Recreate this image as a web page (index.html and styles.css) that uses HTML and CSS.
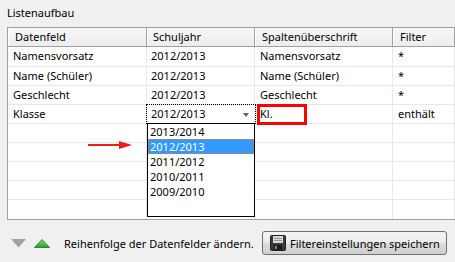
FILE: index.html
```html
<!DOCTYPE html>
<html lang="de">
<head>
    <meta charset="UTF-8">
    <title>Listenaufbau</title>
    <link rel="stylesheet" href="styles.css">
</head>
<body>
    <div class="panel">
        <div class="panel-title">Listenaufbau</div>

        <div class="grid">
            <div class="row head">
                <div class="cell">Datenfeld</div>
                <div class="cell">Schuljahr</div>
                <div class="cell">Spaltenüberschrift</div>
                <div class="cell">Filter</div>
            </div>
            <div class="row first">
                <div class="cell">Namensvorsatz</div>
                <div class="cell">2012/2013</div>
                <div class="cell">Namensvorsatz</div>
                <div class="cell">*</div>
            </div>
            <div class="row">
                <div class="cell">Name (Schüler)</div>
                <div class="cell">2012/2013</div>
                <div class="cell">Name (Schüler)</div>
                <div class="cell">*</div>
            </div>
            <div class="row">
                <div class="cell">Geschlecht</div>
                <div class="cell">2012/2013</div>
                <div class="cell">Geschlecht</div>
                <div class="cell">*</div>
            </div>
            <div class="row">
                <div class="cell">Klasse</div>
                <div class="cell combo">
                    2012/2013
                    <span class="combo-arrow"></span>
                    <ul class="combo-list">
                        <li>2013/2014</li>
                        <li class="selected">2012/2013</li>
                        <li>2011/2012</li>
                        <li>2010/2011</li>
                        <li>2009/2010</li>
                    </ul>
                </div>
                <div class="cell marked">Kl.<span class="mark-box"></span></div>
                <div class="cell">enthält</div>
            </div>
            <div class="row"><div class="cell"></div><div class="cell"></div><div class="cell"></div><div class="cell"></div></div>
            <div class="row"><div class="cell"></div><div class="cell"></div><div class="cell"></div><div class="cell"></div></div>
            <div class="row"><div class="cell"></div><div class="cell"></div><div class="cell"></div><div class="cell"></div></div>
            <div class="row"><div class="cell"></div><div class="cell"></div><div class="cell"></div><div class="cell"></div></div>
            <div class="row last"><div class="cell"></div><div class="cell"></div><div class="cell"></div><div class="cell"></div></div>

            <svg class="pointer" width="45" height="8" viewBox="0 0 45 8">
                <rect x="0" y="3" width="34" height="2" fill="#ee1c1c"/>
                <polygon points="31,0 44,4 31,8" fill="#ee1c1c"/>
            </svg>
        </div>

        <div class="toolbar">
            <svg class="tri" width="15" height="9" viewBox="0 0 15 9">
                <polygon points="0,0 15,0 7.5,8.5" fill="#a0a0a0"/>
            </svg>
            <svg class="tri" width="16" height="9" viewBox="0 0 16 9">
                <defs>
                    <linearGradient id="green" x1="0" y1="0" x2="0" y2="1">
                        <stop offset="0" stop-color="#7ddc72"/>
                        <stop offset="1" stop-color="#2fa02a"/>
                    </linearGradient>
                </defs>
                <polygon points="0.5,8.5 15.5,8.5 8,0.5" fill="url(#green)" stroke="#2b8a27" stroke-width="1"/>
            </svg>
            <span class="hint">Reihenfolge der Datenfelder ändern.</span>
            <button class="save" type="button">
                <svg width="16" height="16" viewBox="0 0 16 16">
                    <rect x="0.5" y="0.5" width="15" height="15" rx="1" fill="#3a3a3a" stroke="#222"/>
                    <rect x="3" y="1" width="10" height="7" fill="#d9d9d9"/>
                    <rect x="4" y="3" width="8" height="1" fill="#9a9a9a"/>
                    <rect x="4" y="5" width="8" height="1" fill="#9a9a9a"/>
                    <rect x="4" y="10" width="8" height="5" fill="#1c1c1c"/>
                    <rect x="5" y="11" width="2" height="3" fill="#8a8a8a"/>
                </svg>
                <span>Filtereinstellungen speichern</span>
            </button>
        </div>
    </div>
</body>
</html>
```
FILE: styles.css
```css
body {
    background-color: #F0F0F0;
    color: #000000;
    font-family: 'Noto Sans', 'Segoe UI', sans-serif;
    font-size: 11px;
    height: 262px;
    margin: 0;
    overflow: hidden;
    width: 455px;
}

.panel {
    overflow: hidden;
    padding: 5px 0 0 7px;
}

.panel-title {
    height: 22px;
    line-height: 16px;
}

.grid {
    background-color: #FFFFFF;
    border: 1px solid #A0A0A0;
    border-right: none;
    position: relative;
    width: 447px;
}

.row {
    border-bottom: 1px solid #E8E8E8;
    box-sizing: border-box;
    display: grid;
    grid-template-columns: 139px 108px 138px 1fr;
    height: 19px;
}

.row.first {
    height: 20px;
}

.row.last {
    border-bottom: none;
}

.cell {
    border-right: 1px solid #E8E8E8;
    line-height: 18px;
    overflow: visible;
    padding-left: 5px;
    position: relative;
    white-space: nowrap;
}

.cell:nth-child(2) {
    padding-left: 4px;
}

.head {
    background: linear-gradient(#F7F7F7, #EDEDED);
    border-bottom: 1px solid #A0A0A0;
}

.head .cell {
    border-right: 1px solid #A0A0A0;
    box-shadow: inset 1px 0 0 #FFFFFF;
    padding-left: 7px;
}

.head .cell:nth-child(2) {
    padding-left: 6px;
}

.combo {
    outline: 1px dotted #000000;
}

.combo-arrow {
    border-left: 3.5px solid transparent;
    border-right: 3.5px solid transparent;
    border-top: 4px solid #606060;
    height: 0;
    position: absolute;
    right: 5px;
    top: 8px;
    width: 0;
}

.combo-list {
    background-color: #FFFFFF;
    border: 1px solid #000000;
    box-sizing: border-box;
    height: 94px;
    left: 0;
    list-style: none;
    margin: 0;
    padding: 0;
    position: absolute;
    top: 18px;
    width: 108px;
    z-index: 2;
}

.combo-list li {
    height: 15px;
    line-height: 15px;
    padding-left: 2px;
}

.combo-list li.selected {
    background-color: #3399FF;
    color: #FFFFFF;
    outline: 1px dotted #D8802A;
    outline-offset: -1px;
}

.mark-box {
    border: 3px solid #FF0000;
    box-sizing: border-box;
    height: 21px;
    left: 2px;
    position: absolute;
    top: -1px;
    width: 50px;
}

.pointer {
    left: 80px;
    position: absolute;
    top: 113px;
}

.toolbar {
    align-items: center;
    display: flex;
    height: 24px;
    margin-top: 11px;
    padding: 0 8px 0 4px;
    white-space: nowrap;
}

.tri {
    display: block;
    margin-right: 8px;
}

.hint {
    margin-left: 6px;
}

.save {
    align-items: center;
    background: linear-gradient(#F4F4F4 0%, #EBEBEB 50%, #DDDDDD 51%, #CFCFCF 100%);
    border: 1px solid #707070;
    border-radius: 3px;
    box-sizing: border-box;
    color: #000000;
    display: flex;
    font-family: inherit;
    font-size: 11px;
    gap: 4px;
    height: 24px;
    margin-left: auto;
    padding: 0 6px 0 7px;
    white-space: nowrap;
    width: 185px;
}
```
